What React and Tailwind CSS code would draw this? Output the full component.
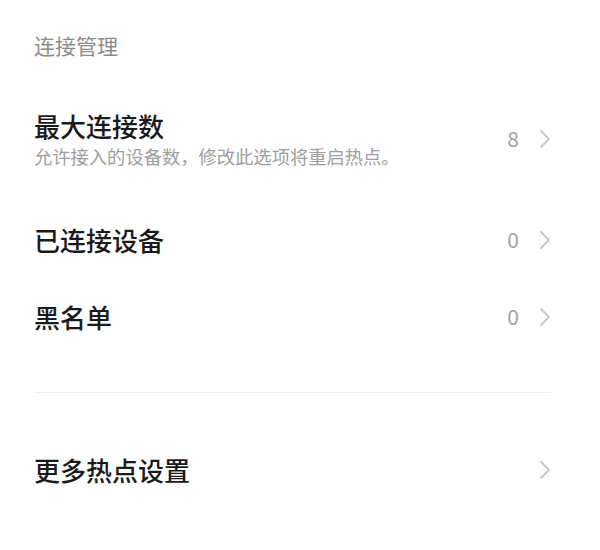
import React from 'react';

const Chevron = () => (
    <svg width="12" height="20" viewBox="0 0 12 20" fill="none">
        <path d="M2 2 L10 10 L2 18" stroke="#c6c6c6" strokeWidth="1.8" strokeLinecap="round" strokeLinejoin="round" />
    </svg>
);

const Row = ({ title, value }) => (
    <div className="h-[77px] flex items-center justify-between">
        <span className="text-[26px] leading-[34px] font-medium text-[#1a1a1a]">{title}</span>
        <div className="flex items-center gap-[20px]">
            {value !== undefined && <span className="text-[21px] text-[#a3a3a3]">{value}</span>}
            <Chevron />
        </div>
    </div>
);

export default function App() {
    return (
        <div
            className="w-[600px] h-[550px] bg-white pl-[34px] pr-[49px]"
            style={{ fontFamily: '"Noto Sans CJK SC", "Noto Sans", sans-serif' }}
        >
            {/* section header */}
            <div className="h-[92px] flex items-center">
                <span className="text-[21px] text-[#8c8c8c]">连接管理</span>
            </div>

            {/* max connections, with hint line */}
            <div className="pt-[17px] pb-[33px] flex items-center justify-between">
                <div>
                    <div className="text-[26px] leading-[34px] font-medium text-[#1a1a1a]">最大连接数</div>
                    <div className="mt-[1px] text-[18.3px] leading-[24px] text-[#9e9e9e]">
                        允许接入的设备数，修改此选项将重启热点。
                    </div>
                </div>
                <div className="flex items-center gap-[20px]">
                    <span className="text-[21px] text-[#a3a3a3]">8</span>
                    <Chevron />
                </div>
            </div>

            <Row title="已连接设备" value="0" />
            <Row title="黑名单" value="0" />

            <div className="mt-[37px] h-px bg-[#eeeeee]" />

            <div className="mt-[38px]">
                <Row title="更多热点设置" />
            </div>
        </div>
    );
}
